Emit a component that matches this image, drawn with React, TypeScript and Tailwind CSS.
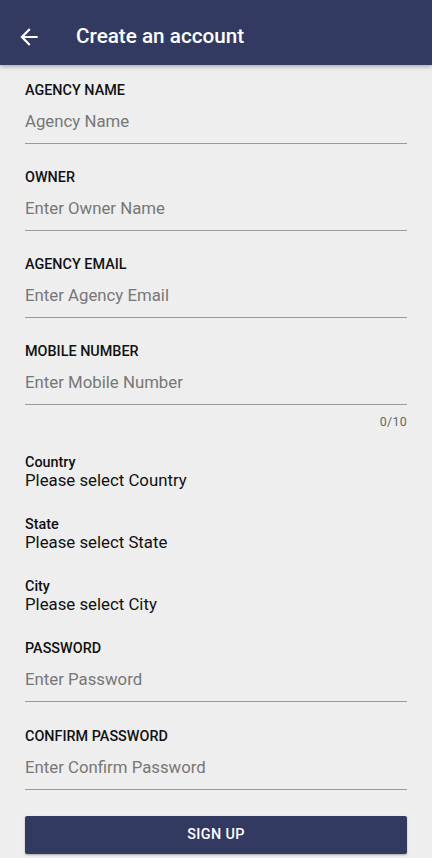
const font = { fontFamily: 'Roboto, "Noto Sans", sans-serif' };

type Field = { label: string; placeholder: string; counter?: string };

const topFields: Field[] = [
  { label: 'AGENCY NAME', placeholder: 'Agency Name' },
  { label: 'OWNER', placeholder: 'Enter Owner Name' },
  { label: 'AGENCY EMAIL', placeholder: 'Enter Agency Email' },
  { label: 'MOBILE NUMBER', placeholder: 'Enter Mobile Number', counter: '0/10' },
];

const pickers = [
  { label: 'Country', value: 'Please select Country' },
  { label: 'State', value: 'Please select State' },
  { label: 'City', value: 'Please select City' },
];

const bottomFields: Field[] = [
  { label: 'PASSWORD', placeholder: 'Enter Password' },
  { label: 'CONFIRM PASSWORD', placeholder: 'Enter Confirm Password' },
];

function TextField({ field }: { field: Field }) {
  return (
    <div className="flex flex-col">
      <label className="text-[14.4px] font-medium leading-[20px] text-[#111]">{field.label}</label>
      <input
        placeholder={field.placeholder}
        className="mt-[8px] h-[24px] bg-transparent text-[16.8px] leading-[24px] text-[#222] outline-none placeholder:text-[#777]"
        style={font}
      />
      <div className="mt-[10px] h-px bg-[#9a9a9a]" />
      {field.counter && (
        <div className="mt-[9px] text-right text-[12.4px] leading-[16px] tracking-wide text-[#666]">
          {field.counter}
        </div>
      )}
    </div>
  );
}

function Picker({ label, value }: { label: string; value: string }) {
  return (
    <div className="flex flex-col">
      <span className="text-[14.4px] font-medium leading-[16px] text-[#111]">{label}</span>
      <span className="text-[16.8px] leading-[18px] text-[#111]">{value}</span>
    </div>
  );
}

export default function App() {
  return (
    <div className="flex h-[858px] w-[432px] flex-col overflow-hidden bg-[#eeeeee]" style={font}>
      <header className="z-10 flex h-[65px] shrink-0 items-center bg-[#333a62] pt-[8px] shadow-[0_2px_4px_rgba(0,0,0,0.25)]">
        <svg viewBox="0 0 24 24" className="ml-[16px] h-[26px] w-[26px] fill-white">
          <path d="M20 11H7.83l5.59-5.59L12 4l-8 8 8 8 1.41-1.41L7.83 13H20v-2z" />
        </svg>
        <h1 className="ml-[34px] text-[20.7px] font-medium text-white">Create an account</h1>
      </header>

      <main className="flex flex-col px-[25px] pt-[16px]">
        <div className="flex flex-col gap-[24px]">
          {topFields.map((f) => (
            <TextField key={f.label} field={f} />
          ))}
        </div>

        <div className="mt-[25px] flex flex-col gap-[28px]">
          {pickers.map((p) => (
            <Picker key={p.label} label={p.label} value={p.value} />
          ))}
        </div>

        <div className="mt-[26px] flex flex-col gap-[25px]">
          {bottomFields.map((f) => (
            <TextField key={f.label} field={f} />
          ))}
        </div>

        <button className="mt-[26px] h-[38px] w-full rounded-[2px] bg-[#333a62] text-[14.4px] font-medium tracking-wide text-white shadow-[0_1px_2px_rgba(0,0,0,0.3)]">
          SIGN UP
        </button>
      </main>
    </div>
  );
}
